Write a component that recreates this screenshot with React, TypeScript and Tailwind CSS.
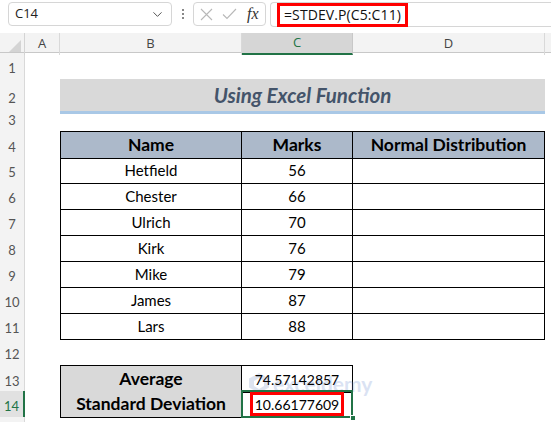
import React from 'react';
import { ChevronDown } from 'lucide-react';

const COLS = 'grid grid-cols-[25px_35px_182px_111px_192px_1fr]';

const people = [
  { row: 5, name: 'Hetfield', marks: 56 },
  { row: 6, name: 'Chester', marks: 66 },
  { row: 7, name: 'Ulrich', marks: 70 },
  { row: 8, name: 'Kirk', marks: 76 },
  { row: 9, name: 'Mike', marks: 79 },
  { row: 10, name: 'James', marks: 87 },
  { row: 11, name: 'Lars', marks: 88 },
];

const RowHead = ({ n, active }: { n?: number; active?: boolean }) => (
  <div
    className={
      active
        ? 'flex items-center justify-center bg-[#e1e1e1] border-b border-[#d4d4d4] border-r-2 border-r-[#217346] text-[#217346] text-[13px] pt-[6px]'
        : 'flex items-center justify-center bg-[#f3f3f3] border-b border-r border-[#d9d9d9] text-[#555] text-[13px] pt-[6px]'
    }
  >
    {n}
  </div>
);

const Blank = () => <div />;

export default function App() {
  return (
    <div className="w-[551px] h-[422px] overflow-hidden bg-white font-['Lato','Liberation_Sans',sans-serif] text-black">
      {/* Formula bar */}
      <div className="h-[33px] flex items-start pt-[2px] font-['Open_Sans','Liberation_Sans',sans-serif]">
        <div className="ml-[8px] w-[164px] h-[24px] rounded-[4px] border border-[#d6d6d6] flex items-center justify-between pl-[6px] pr-[6px] text-[13px] text-[#222]">
          <span>C14</span>
          <ChevronDown size={15} strokeWidth={1.6} className="text-[#555]" />
        </div>
        <div className="w-[21px] h-[24px] flex flex-col items-center justify-center gap-[2px]">
          <span className="w-[2px] h-[2px] bg-[#888]" />
          <span className="w-[2px] h-[2px] bg-[#888]" />
          <span className="w-[2px] h-[2px] bg-[#888]" />
        </div>
        <div className="w-[73px] h-[24px] rounded-[4px] border border-[#d6d6d6] flex items-center pl-[6px] gap-[9px]">
          <svg width="13" height="13" viewBox="0 0 13 13" fill="none" stroke="#b8b8b8" strokeWidth="1.1">
            <path d="M1 1L12 12M12 1L1 12" />
          </svg>
          <svg width="15" height="12" viewBox="0 0 15 12" fill="none" stroke="#b8b8b8" strokeWidth="1.1">
            <path d="M1 6.5L5 10.5L14 1" />
          </svg>
          <span className="font-['Liberation_Serif',serif] italic text-[16px] leading-none text-[#333] ml-[1px]">fx</span>
        </div>
        <div className="ml-[4px] flex-1 h-[25px] rounded-l-[4px] border-y border-l border-[#d6d6d6] flex items-center pl-[6px]">
          <div className="h-[24px] px-[4px] border-[3px] border-[#ff0000] flex items-center text-[14px] text-[#111] tracking-[0.1px]">
            =STDEV.P(C5:C11)
          </div>
        </div>
      </div>

      {/* Column headers */}
      <div className={`${COLS} h-[20px] bg-[#f3f3f3] border-b border-[#c8c8c8] text-[13px] text-[#444] font-['Open_Sans','Liberation_Sans',sans-serif]`}>
        <div className="relative border-r border-[#d4d4d4]">
          <svg className="absolute right-[3px] bottom-[3px]" width="12" height="12" viewBox="0 0 12 12">
            <path d="M12 0V12H0Z" fill="#d4d4d4" />
          </svg>
        </div>
        <div className="flex items-center justify-center border-r border-[#d9d9d9]">A</div>
        <div className="flex items-center justify-center border-r border-[#d9d9d9]">B</div>
        <div className="flex items-center justify-center bg-[#d6d6d6] border-r border-[#c8c8c8] border-b-2 border-b-[#217346] text-[#217346]">C</div>
        <div className="flex items-center justify-center border-r border-[#d9d9d9]">D</div>
        <div />
      </div>

      {/* Row 1 */}
      <div className={`${COLS} h-[26px]`}>
        <RowHead n={1} />
      </div>

      {/* Row 2: title */}
      <div className={`${COLS} h-[26px]`}>
        <RowHead n={2} />
        <Blank />
        <div className="col-span-3 bg-[#d9d9d9] border-b-[3px] border-[#a9c8e6] flex items-center justify-center pt-[1px]">
          <span className="font-bold italic text-[20.5px] text-[#44546a]">Using Excel Function</span>
        </div>
      </div>

      {/* Row 3 */}
      <div className={`${COLS} h-[26px]`}>
        <RowHead n={3} />
      </div>

      {/* Row 4: table header */}
      <div className={`${COLS} h-[26px]`}>
        <RowHead n={4} />
        <Blank />
        <div className="bg-[#acb9ca] border border-black flex items-center justify-center font-bold text-[17.5px]">Name</div>
        <div className="bg-[#acb9ca] border-y border-r border-black flex items-center justify-center font-bold text-[17.5px]">Marks</div>
        <div className="bg-[#acb9ca] border-y border-r border-black flex items-center justify-center font-bold text-[17.5px]">Normal Distribution</div>
      </div>

      {/* Rows 5-11 */}
      {people.map(p => (
        <div key={p.row} className={`${COLS} h-[26px]`}>
          <RowHead n={p.row} />
          <Blank />
          <div className="border-x border-b border-black flex items-center justify-center text-[15px]">{p.name}</div>
          <div className="border-r border-b border-black flex items-center justify-center text-[15px]">{p.marks}</div>
          <div className="border-r border-b border-black" />
        </div>
      ))}

      {/* Row 12 */}
      <div className={`${COLS} h-[26px]`}>
        <RowHead n={12} />
      </div>

      {/* Row 13 */}
      <div className={`${COLS} h-[26px]`}>
        <RowHead n={13} />
        <Blank />
        <div className="bg-[#d9d9d9] border border-black flex items-center justify-center font-bold text-[17.5px]">Average</div>
        <div className="relative border-y border-r border-black flex items-center justify-center text-[14px]">
          {/* watermark */}
          <div className="absolute left-[6px] top-[6px] flex items-center gap-[3px] opacity-25 pointer-events-none">
            <svg width="22" height="22" viewBox="0 0 22 22">
              <path d="M11 1L21 6.5V15.5L11 21L1 15.5V6.5Z" fill="#7d93c2" />
              <path d="M11 6L16 9V14L11 17L6 14V9Z" fill="#ffffff" />
            </svg>
            <span className="text-[21px] font-bold text-[#6f8fd0] leading-none">exceldemy</span>
          </div>
          <span className="relative">74.57142857</span>
        </div>
      </div>

      {/* Row 14 */}
      <div className={`${COLS} h-[26px]`}>
        <RowHead n={14} active />
        <Blank />
        <div className="bg-[#d9d9d9] border-x border-b border-black flex items-center justify-center font-bold text-[17.5px]">Standard Deviation</div>
        <div className="relative border-r border-b border-black flex items-center justify-center text-[14px]">
          <div className="relative h-[24px] w-[94px] border-[3px] border-[#ff0000] flex items-center justify-center">
            10.66177609
          </div>
          <div className="absolute -left-[1px] -top-[1px] -right-[1px] -bottom-[1px] border-2 border-[#217346] pointer-events-none" />
          <div className="absolute -right-[4px] -bottom-[4px] w-[6px] h-[6px] bg-[#217346] border border-white" />
        </div>
      </div>

      {/* Row 15 */}
      <div className={`${COLS} h-[26px]`}>
        <RowHead />
      </div>
    </div>
  );
}
